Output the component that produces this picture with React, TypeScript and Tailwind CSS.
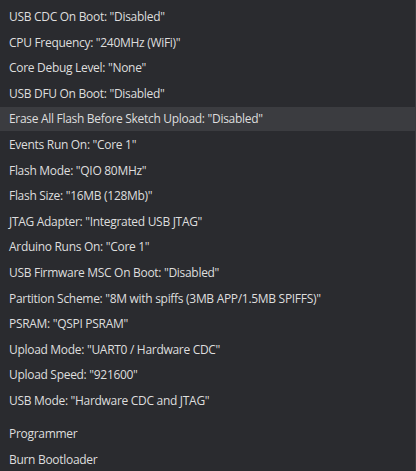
const items = [
  'USB CDC On Boot: "Disabled"',
  'CPU Frequency: "240MHz (WiFi)"',
  'Core Debug Level: "None"',
  'USB DFU On Boot: "Disabled"',
  'Erase All Flash Before Sketch Upload: "Disabled"',
  'Events Run On: "Core 1"',
  'Flash Mode: "QIO 80MHz"',
  'Flash Size: "16MB (128Mb)"',
  'JTAG Adapter: "Integrated USB JTAG"',
  'Arduino Runs On: "Core 1"',
  'USB Firmware MSC On Boot: "Disabled"',
  'Partition Scheme: "8M with spiffs (3MB APP/1.5MB SPIFFS)"',
  'PSRAM: "QSPI PSRAM"',
  'Upload Mode: "UART0 / Hardware CDC"',
  'Upload Speed: "921600"',
  'USB Mode: "Hardware CDC and JTAG"',
];

const tools = ["Programmer", "Burn Bootloader"];

function Item({ label, active }: { label: string; active?: boolean }) {
  return (
    <div
      className={`h-[24px] flex items-center px-[9px] ${active ? "bg-[#3b3c40]" : ""}`}
    >
      {label}
    </div>
  );
}

export default function App() {
  return (
    <div
      className="w-[416px] h-[471px] overflow-hidden bg-[#2a2b2f] text-[#dedede] text-[12px] tracking-[-0.3px] pt-[5px] border-r border-[#3a3b3f]"
      style={{ fontFamily: '"Open Sans", "Noto Sans", sans-serif' }}
    >
      <div className="flex flex-col gap-[1.6px]">
        {items.map((label, i) => (
          <Item key={label} label={label} active={i === 4} />
        ))}
      </div>
      <div className="h-[9px]" />
      <div className="flex flex-col gap-[2px]">
        {tools.map((label) => (
          <Item key={label} label={label} />
        ))}
      </div>
    </div>
  );
}
